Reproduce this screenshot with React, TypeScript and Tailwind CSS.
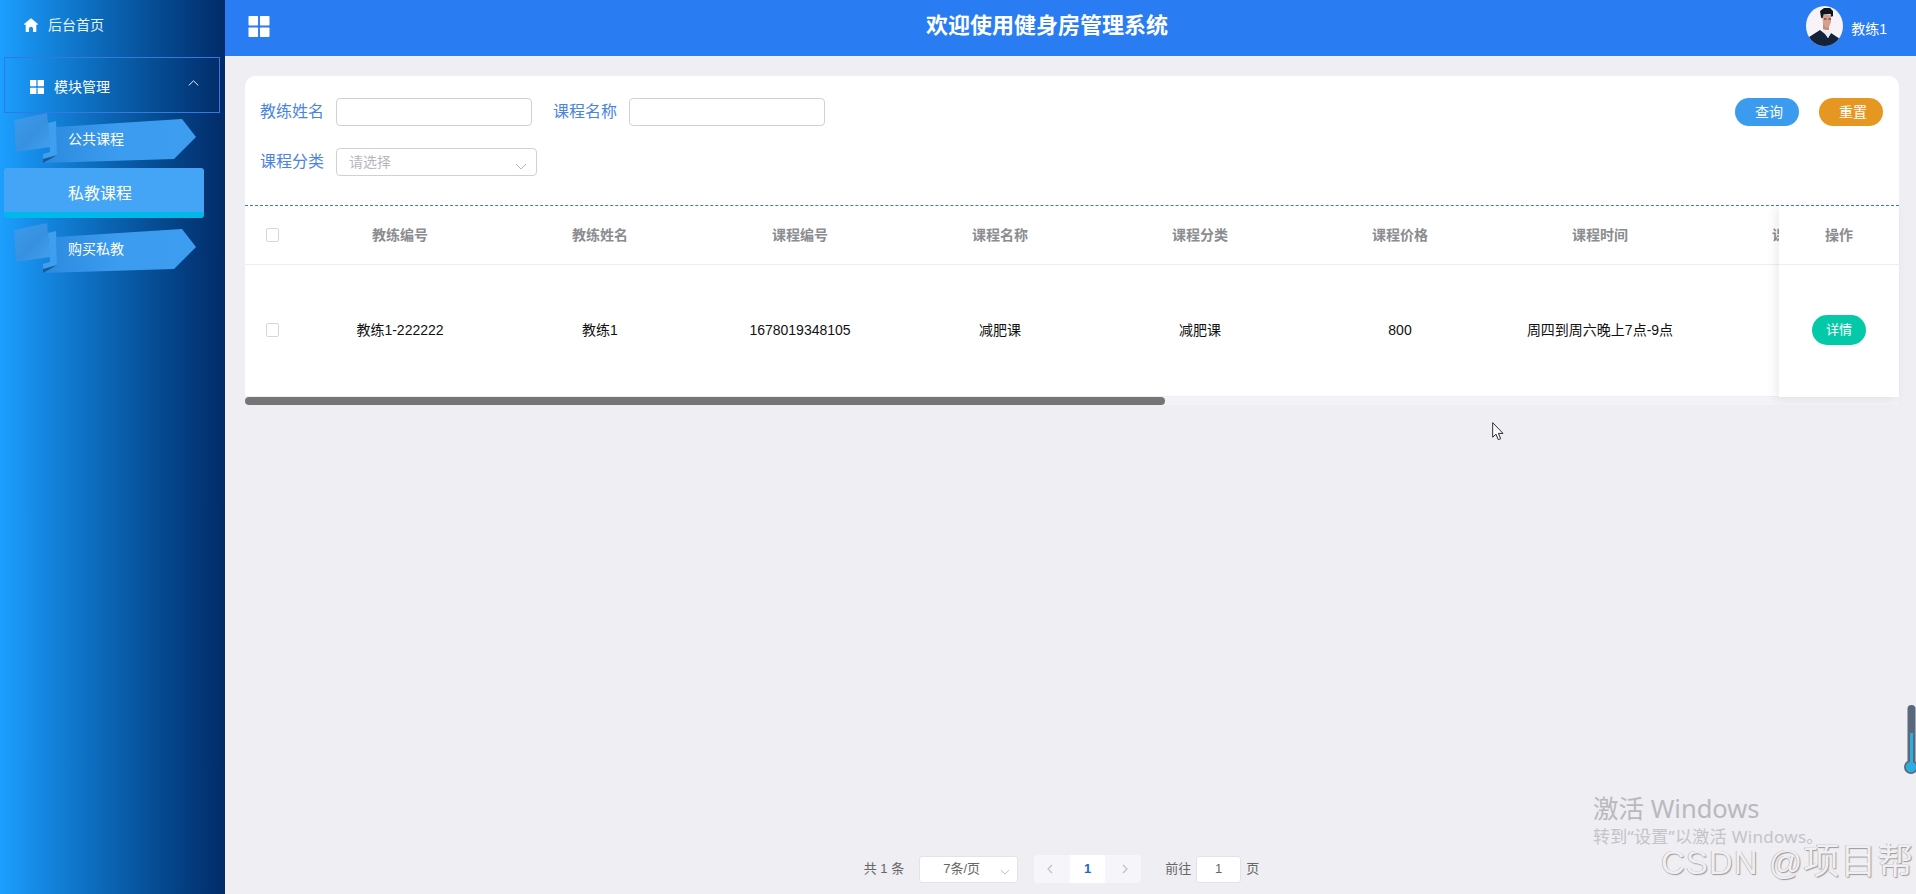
import React from "react";

const cols = ["教练编号", "教练姓名", "课程编号", "课程名称", "课程分类", "课程价格", "课程时间", "课程内容"];
const vals = ["教练1-222222", "教练1", "1678019348105", "减肥课", "减肥课", "800", "周四到周六晚上7点-9点", ""];

function Grid({ className }: { className: string }) {
  return (
    <svg className={className} viewBox="0 0 22 22" fill="#fff">
      <rect x="0" y="0" width="10" height="10" rx="0.8" />
      <rect x="12" y="0" width="10" height="10" rx="0.8" />
      <rect x="0" y="12" width="10" height="10" rx="0.8" />
      <rect x="12" y="12" width="10" height="10" rx="0.8" />
    </svg>
  );
}

function Ribbon({ label }: { label: string }) {
  return (
    <div className="relative h-[50px] w-[225px] shrink-0">
      <svg className="absolute left-[14px] top-0" width="182" height="50" viewBox="0 0 182 50">
        <defs>
          <linearGradient id="rb" x1="0" y1="0" x2="1" y2="0">
            <stop offset="0" stopColor="#2d8ade" />
            <stop offset="0.5" stopColor="#3b9cf0" />
            <stop offset="1" stopColor="#3d9df0" />
          </linearGradient>
          <linearGradient id="sq" x1="0" y1="0" x2="1" y2="1">
            <stop offset="0" stopColor="#3c9bec" />
            <stop offset="0.55" stopColor="#3890e0" />
            <stop offset="1" stopColor="#42a0f0" />
          </linearGradient>
        </defs>
        <polygon points="42,14 168,6 182,24 160,46 29,50 43,42" fill="url(#rb)" />
        <polygon points="29,50 29,44 43,42" fill="#175a9e" />
        <polygon points="0,7 33,0 36,34 2,39" fill="url(#sq)" />
        <polygon points="34,10 42,8 43,42 29,46 29,41 36,39" fill="#3f9fee" />
      </svg>
      <span className="absolute left-[68px] top-[16px] text-sm leading-5 text-white">{label}</span>
    </div>
  );
}

function Field({ label, width }: { label: string; width: string }) {
  return (
    <div className="flex items-center">
      <span className="w-[76px] pr-[13px] text-right text-base leading-7 whitespace-nowrap text-[#4a84de]">{label}</span>
      <input className={`h-7 rounded border border-[#cfd1d6] bg-white ${width}`} />
    </div>
  );
}

function Chevron({ className }: { className: string }) {
  return (
    <svg className={className} viewBox="0 0 12 7" fill="none" stroke="#b5b7bd" strokeWidth="1">
      <path d="M1 1l5 5 5-5" />
    </svg>
  );
}

export default function App() {
  return (
    <div className="relative flex h-screen w-full overflow-hidden bg-[#eeeef3] font-['Liberation_Sans','Noto_Sans_CJK_SC',sans-serif]">
      <aside className="flex w-[225px] shrink-0 flex-col bg-gradient-to-r from-[#1c9fff] to-[#022b68] text-white">
        <div className="flex h-[50px] shrink-0 items-center pl-6 text-sm">
          <svg className="mr-[10px] h-[14px] w-[14px]" viewBox="0 0 14 14" fill="#fff">
            <path d="M7 .3 0 6l.8 1 .9-.5V14H5v-3.2a2 2 0 0 1 4 0V14h3.300V6.500l.9.5.8-1z" />
          </svg>
          <span className="text-[#e8f3ff]">后台首页</span>
        </div>
        <div className="ml-1 mr-[5px] mt-[7px] flex h-[56px] shrink-0 items-center border border-[#3578df] pl-[25px] pt-[4px] text-sm">
          <Grid className="mr-[10px] h-[14px] w-[14px]" />
          <span>模块管理</span>
          <svg className="ml-[78px] mb-[8px] h-[6px] w-[11px]" viewBox="0 0 11 6" fill="none" stroke="#e6f0ff" strokeWidth="1">
            <path d="M.7 5.500 5.500.8l4.800 4.700" />
          </svg>
        </div>
        <Ribbon label="公共课程" />
        <div className="ml-1 mt-[5px] mb-[5px] flex h-[50px] w-[200px] shrink-0 items-center rounded-[3px] border-b-[6px] border-[#00b9ea] bg-[#44a5f6] pl-[64px] pt-[7px] text-base">
          私教课程
        </div>
        <Ribbon label="购买私教" />
      </aside>

      <main className="flex min-w-0 flex-1 flex-col">
        <header className="flex h-14 shrink-0 items-center bg-[#2a7cf3] pl-[23px] pr-[29px] text-white">
          <Grid className="mb-[3px] h-[21px] w-[22px]" />
          <h1 className="ml-[18px] mb-[4px] flex-1 text-center text-[22px] leading-7 font-bold">欢迎使用健身房管理系统</h1>
          <svg className="mb-1 h-10 w-[37px]" viewBox="0 0 37 40">
            <defs>
              <clipPath id="av">
                <ellipse cx="18.500" cy="20" rx="18.500" ry="20" />
              </clipPath>
            </defs>
            <g clipPath="url(#av)">
              <rect width="37" height="40" fill="#f8f2f9" />
              <path d="M17 18h6v6h-6z" fill="#c58d7a" />
              <path d="M0 40v-7l14-9 5 4 3 4 3-5 12 8v5z" fill="#14233a" />
              <path d="M16 24l3 3 3 5 3-5-1-3-3 2-3-3z" fill="#e9edf2" />
              <path d="M16.500 9H25v7l-2 5-3 1-3-4z" fill="#d8a08c" />
              <path d="M14 5l4-3h6l3 3v5l-1.500 1-1-3-7 .5-1 4-1.500-1z" fill="#10161f" />
              <path d="M18 13h2.500M22.500 13H25" stroke="#3a2420" strokeWidth="1" />
            </g>
          </svg>
          <span className="ml-2 mt-[1px] text-sm">教练1</span>
        </header>

        <div className="flex min-h-0 flex-1 flex-col pl-5 pr-[17px] pt-5">
          <section className="rounded-t-[10px] bg-white">
            <div className="flex h-[130px] justify-between border-b border-dashed border-[#3a7fb8] pl-[15px] pr-4 pt-[22px]">
              <div className="flex flex-col gap-[22px]">
                <div className="flex gap-[21px]">
                  <Field label="教练姓名" width="w-[196px]" />
                  <div className="flex items-center">
                    <span className="w-[76px] pr-[12px] text-right text-base leading-7 whitespace-nowrap text-[#4a84de]">课程名称</span>
                    <input className="h-7 w-[196px] rounded border border-[#cfd1d6] bg-white" />
                  </div>
                </div>
                <div className="flex items-center">
                  <span className="w-[76px] pr-[13px] text-right text-base leading-7 whitespace-nowrap text-[#4a84de]">课程分类</span>
                  <div className="flex h-7 w-[201px] items-center justify-between rounded border border-[#cfd1d6] pl-[12px] pr-[9px]">
                    <span className="text-sm text-[#b5b7bd]">请选择</span>
                    <Chevron className="mt-[8px] h-[7px] w-[12px]" />
                  </div>
                </div>
              </div>
              <div className="flex items-start gap-5">
                <button className="h-7 w-16 rounded-full bg-[#3a9bef] pl-1 text-sm text-white">查询</button>
                <button className="h-7 w-16 rounded-full bg-[#e69722] pl-1 text-sm text-white">重置</button>
              </div>
            </div>

            <div className="relative">
              <div className="overflow-hidden">
                <div className="grid h-[59px] w-max grid-cols-[55px_repeat(8,200px)] items-center border-b border-[#ebeef5]">
                  <span className="ml-[21px] h-[14px] w-[13px] rounded-[2px] border border-[#d5d7dc]" />
                  {cols.map((c) => (
                    <span key={c} className="text-center text-sm font-bold text-[#8a8c90]">{c}</span>
                  ))}
                </div>
                <div className="grid h-[132px] w-max grid-cols-[55px_repeat(8,200px)] items-center border-b border-[#ebeef5] pb-[2px]">
                  <span className="ml-[21px] h-[14px] w-[13px] rounded-[2px] border border-[#d5d7dc]" />
                  {vals.map((v, i) => (
                    <span key={i} className="text-center text-sm text-[#111]">{v}</span>
                  ))}
                </div>
              </div>
              <div className="absolute right-0 top-0 bottom-0 w-[120px] bg-white shadow-[-3px_2px_10px_rgba(0,0,0,0.08)]">
                <div className="flex h-[59px] items-center justify-center border-b border-[#ebeef5] text-sm font-bold text-[#8a8c90]">操作</div>
                <div className="flex h-[131px] items-center justify-center pb-[2px]">
                  <button className="h-[30px] w-[54px] rounded-full bg-[#04c9a8] text-[13px] text-white">详情</button>
                </div>
              </div>
            </div>
            <div className="h-2 bg-[#f3f3f7]">
              <div className="h-2 w-[920px] rounded-[4px] bg-[#757575]" />
            </div>
          </section>

          <div className="mt-auto mb-[11px] flex h-[28px] items-center justify-center pr-[21px] text-[13px] text-[#666]">
            <span className="mr-[15px] whitespace-pre">共 1 条</span>
            <div className="relative mr-4 flex h-[27px] w-[99px] items-center rounded-[3px] border border-[#e2e3e8] bg-white pl-[23px]">
              <span>7条/页</span>
              <Chevron className="absolute right-[7px] top-[12px] h-[6px] w-[10px]" />
            </div>
            <div className="mr-6 flex h-7 items-center">
              <span className="flex h-7 w-9 items-center justify-center rounded-l-[4px] bg-[#f6f6fa] pr-[4px]">
                <svg className="h-[10px] w-[6px]" viewBox="0 0 6 10" fill="none" stroke="#c0c2c8" strokeWidth="1.300"><path d="M5 1 1 5l4 4" /></svg>
              </span>
              <span className="flex h-7 w-[35px] items-center justify-center bg-white font-bold text-[#2068c0]">1</span>
              <span className="flex h-7 w-9 items-center justify-center rounded-r-[4px] bg-[#f6f6fa] pl-[4px]">
                <svg className="h-[10px] w-[6px]" viewBox="0 0 6 10" fill="none" stroke="#c0c2c8" strokeWidth="1.300"><path d="M1 1l4 4-4 4" /></svg>
              </span>
            </div>
            <span>前往</span>
            <span className="mx-[5px] flex h-[27px] w-[45px] items-center justify-center rounded-[3px] border border-[#e2e3e8] bg-white">1</span>
            <span>页</span>
          </div>
        </div>
      </main>

      {/* cursor */}
      <svg className="absolute left-[1492px] top-[422px]" width="12" height="19" viewBox="0 0 12 19">
        <path d="M.7.7v14.500l3.300-3 2.300 5.500 2.400-1-2.300-5.300h4.600z" fill="#fff" stroke="#2a2a2e" strokeWidth="1" />
      </svg>

      {/* thermometer */}
      <svg className="absolute left-[1902px] top-[704px]" width="14" height="72" viewBox="0 0 14 72">
        <rect x="5.500" y="1" width="8" height="64" rx="4" fill="#59687a" />
        <circle cx="9" cy="63" r="7" fill="#5a6b78" />
        <rect x="8" y="29" width="3" height="30" fill="#2badE0" />
        <circle cx="9" cy="63" r="5.200" fill="#2badE0" />
      </svg>

      {/* watermarks */}
      <div className="pointer-events-none absolute left-[1593px] top-[793px] whitespace-nowrap text-[25.500px] leading-[30px] text-[#b9b9bd] font-['Noto_Sans','Noto_Sans_CJK_SC',sans-serif]">激活 Windows</div>
      <div className="pointer-events-none absolute left-[1593px] top-[826px] whitespace-nowrap text-[17px] leading-[22px] tracking-[0.3px] text-[#c4c4c8] font-['Noto_Sans','Noto_Sans_CJK_SC',sans-serif]">转到“设置”以激活 Windows。</div>
      <div className="pointer-events-none absolute left-[1661px] top-[843px] whitespace-nowrap text-[33px] leading-[38px] tracking-[1px] text-[#f0f0f3] [text-shadow:1px_1px_1px_#9a9a9e,-0.5px_-0.5px_0.5px_#a8a8ac] font-['Liberation_Sans','Noto_Sans_CJK_SC',sans-serif]">
        CSDN @<span className="text-[36px]">项目帮</span>
      </div>
    </div>
  );
}
